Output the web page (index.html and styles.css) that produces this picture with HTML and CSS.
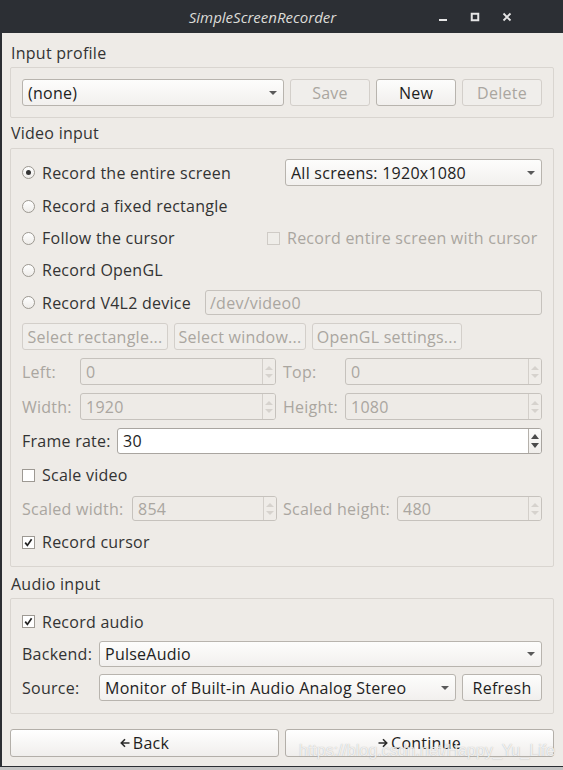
FILE: index.html
```html
<!DOCTYPE html>
<html>
<head>
<meta charset="utf-8">
<title>SimpleScreenRecorder</title>
<link rel="stylesheet" href="styles.css">
</head>
<body>
<div class="window">
  <div class="titlebar">
    <div class="title">SimpleScreenRecorder</div>
    <div class="wm">
      <span class="wm-btn"><svg width="10" height="10" viewBox="0 0 10 10"><rect x="1" y="7" width="8" height="2" fill="#e6e6e6"/></svg></span>
      <span class="wm-btn"><svg width="10" height="10" viewBox="0 0 10 10"><rect x="1.75" y="1.75" width="6.5" height="6.5" fill="none" stroke="#e6e6e6" stroke-width="2"/></svg></span>
      <span class="wm-btn"><svg width="10" height="10" viewBox="0 0 10 10"><path d="M1.5 1.5 L8.5 8.5 M8.5 1.5 L1.5 8.5" stroke="#e6e6e6" stroke-width="1.8"/></svg></span>
    </div>
  </div>

  <div class="content">
    <div class="sec-title t1">Input profile</div>
    <div class="group g1">
      <div class="row h27">
        <div class="combo w-profile"><span class="ctext">(none)</span><i class="arrow"></i></div>
        <div class="btn dis w80">Save</div>
        <div class="btn w80">New</div>
        <div class="btn dis w80">Delete</div>
      </div>
    </div>

    <div class="sec-title t2">Video input</div>
    <div class="group g2">
      <div class="row h27">
        <div class="opt left-263"><span class="radio on"><i></i></span><span>Record the entire screen</span></div>
        <div class="combo flex1"><span class="ctext">All screens: 1920x1080</span><i class="arrow"></i></div>
      </div>
      <div class="row h24 mt8">
        <div class="opt"><span class="radio"></span><span>Record a fixed rectangle</span></div>
      </div>
      <div class="row h24 mt8">
        <div class="opt left-245"><span class="radio"></span><span>Follow the cursor</span></div>
        <div class="opt dtext"><span class="cb dis"></span><span>Record entire screen with cursor</span></div>
      </div>
      <div class="row h24 mt8">
        <div class="opt"><span class="radio"></span><span>Record OpenGL</span></div>
      </div>
      <div class="row h25 mt8">
        <div class="opt left-183"><span class="radio"></span><span>Record V4L2 device</span></div>
        <div class="field dis flex1"><span class="ftext">/dev/video0</span></div>
      </div>
      <div class="row h27 mt8 gap6">
        <div class="btn dis w146">Select rectangle...</div>
        <div class="btn dis w132">Select window...</div>
        <div class="btn dis w150">OpenGL settings...</div>
      </div>
      <div class="grid4 h27 mt8">
        <span class="lbl dtext">Left:</span>
        <div class="spin dis"><span class="val">0</span><span class="sbtn"><i class="up"></i><i class="dn"></i></span></div>
        <span class="lbl dtext pl7">Top:</span>
        <div class="spin dis"><span class="val">0</span><span class="sbtn"><i class="up"></i><i class="dn"></i></span></div>
      </div>
      <div class="grid4 h27 mt8">
        <span class="lbl dtext">Width:</span>
        <div class="spin dis"><span class="val">1920</span><span class="sbtn"><i class="up"></i><i class="dn"></i></span></div>
        <span class="lbl dtext pl7">Height:</span>
        <div class="spin dis"><span class="val">1080</span><span class="sbtn"><i class="up"></i><i class="dn"></i></span></div>
      </div>
      <div class="row h26 mt8">
        <span class="lbl w95">Frame rate:</span>
        <div class="spin flex1"><span class="val">30</span><span class="sbtn"><i class="up"></i><i class="dn"></i></span></div>
      </div>
      <div class="row h26 mt8">
        <div class="opt"><span class="cb"></span><span>Scale video</span></div>
      </div>
      <div class="grid4b h25 mt8">
        <span class="lbl dtext">Scaled width:</span>
        <div class="spin dis"><span class="val">854</span><span class="sbtn"><i class="up"></i><i class="dn"></i></span></div>
        <span class="lbl dtext pl6">Scaled height:</span>
        <div class="spin dis"><span class="val">480</span><span class="sbtn"><i class="up"></i><i class="dn"></i></span></div>
      </div>
      <div class="row h26 mt8">
        <div class="opt"><span class="cb"><svg width="11" height="11" viewBox="0 0 11 11"><path d="M2.2 5.6 L4.4 8.4 L8.6 2.2" fill="none" stroke="#222" stroke-width="1.7"/></svg></span><span>Record cursor</span></div>
      </div>
    </div>

    <div class="sec-title t3">Audio input</div>
    <div class="group g3">
      <div class="row h25">
        <div class="opt"><span class="cb"><svg width="11" height="11" viewBox="0 0 11 11"><path d="M2.2 5.6 L4.4 8.4 L8.6 2.2" fill="none" stroke="#222" stroke-width="1.7"/></svg></span><span>Record audio</span></div>
      </div>
      <div class="row h26 mt7">
        <span class="lbl w77">Backend:</span>
        <div class="combo flex1"><span class="ctext">PulseAudio</span><i class="arrow"></i></div>
      </div>
      <div class="row h27 mt7 gap6">
        <span class="lbl w77 mr-6">Source:</span>
        <div class="combo flex1"><span class="ctext">Monitor of Built-in Audio Analog Stereo</span><i class="arrow"></i></div>
        <div class="btn w80">Refresh</div>
      </div>
    </div>

    <div class="navrow">
      <div class="btn nav"><svg class="navarrow" width="10" height="10" viewBox="0 0 10 10"><path d="M9.5 5 H1.5 M5 1.3 L1.3 5 L5 8.7" fill="none" stroke="#2a2a2a" stroke-width="1.6"/></svg>Back</div>
      <div class="btn nav"><svg class="navarrow" width="10" height="10" viewBox="0 0 10 10"><path d="M0.5 5 H8.5 M5 1.3 L8.7 5 L5 8.7" fill="none" stroke="#2a2a2a" stroke-width="1.6"/></svg>Continue</div>
    </div>
  </div>
  <div class="watermark">https://blog.csdn.net/Happy_Yu_Life</div>
</div>
</body>
</html>
```
FILE: styles.css
```css
html, body {
  margin: 0;
  padding: 0;
}
body {
  width: 563px;
  height: 770px;
  overflow: hidden;
  background: #c4c4c4;
  font-family: "Open Sans", "Noto Sans", sans-serif;
  font-size: 16px;
  letter-spacing: 0.25px;
  color: #333;
}
.window {
  position: relative;
  width: 561px;
  height: 766px;
  border-left: 2px solid #2b2e33;
  border-bottom: 1px solid #2b2e33;
  background: #eeebe7;
  display: flex;
  flex-direction: column;
}
.titlebar {
  height: 33px;
  flex: none;
  margin-left: -2px;
  background: #2c2f34;
  display: grid;
  grid-template-columns: 1fr;
  align-items: center;
}
.title {
  grid-area: 1 / 1;
  justify-self: stretch;
  text-align: center;
  padding-right: 38px;
  font-style: italic;
  color: #dcdcd8;
  font-size: 15px;
  letter-spacing: 0;
}
.wm {
  grid-area: 1 / 1;
  justify-self: end;
  display: flex;
  padding-right: 40px;
}
.wm-btn {
  width: 32px;
  height: 20px;
  display: flex;
  align-items: center;
  justify-content: center;
}
.content {
  flex: 1;
  display: flex;
  flex-direction: column;
  padding: 0 9px 0 8px;
}
.sec-title {
  line-height: 22px;
  padding-left: 1px;
  box-sizing: border-box;
  flex: none;
}
.t1 { height: 34px; padding-top: 9px; }
.t2 { height: 30px; padding-top: 4px; }
.t3 { height: 31px; padding-top: 6px; }
.group {
  border: 1px solid #d9d5d0;
  border-radius: 2px;
  flex: none;
}
.g1 { padding: 11px; }
.g2 { padding: 10px 11px 11px; }
.g3 { padding: 10px 11px 12px; }
.row {
  display: flex;
  align-items: center;
}
.h24 { height: 24px; }
.h25 { height: 25px; }
.h26 { height: 26px; }
.h27 { height: 27px; }
.mt7 { margin-top: 7px; }
.mt8 { margin-top: 8px; }
.gap6 { gap: 6px; }
.flex1 { flex: 1; }
.w-profile { width: 262px; flex: none; }
.w80 { width: 80px; }
.w146 { width: 146px; }
.w132 { width: 132px; }
.w150 { width: 150px; }
.w95 { width: 95px; flex: none; }
.w77 { width: 77px; flex: none; }
.mr-6 { margin-right: -6px; }
.pl7 { padding-left: 7px; }
.pl6 { padding-left: 6px; }
.left-263 { width: 263px; flex: none; }
.left-245 { width: 245px; flex: none; }
.left-183 { width: 183px; flex: none; }

.opt {
  display: flex;
  align-items: center;
  gap: 7px;
  white-space: nowrap;
}
.dtext { color: #aaa6a0; }
.lbl { white-space: nowrap; }

.radio {
  width: 13px;
  height: 13px;
  box-sizing: border-box;
  border-radius: 50%;
  border: 1px solid #9c9891;
  background: linear-gradient(#ffffff, #eeece9);
  display: flex;
  align-items: center;
  justify-content: center;
  flex: none;
}
.radio.on i {
  width: 5px;
  height: 5px;
  border-radius: 50%;
  background: #333;
}
.cb {
  width: 13px;
  height: 13px;
  box-sizing: border-box;
  border: 1px solid #9d9993;
  background: #fff;
  display: flex;
  align-items: center;
  justify-content: center;
  flex: none;
}
.cb.dis {
  border-color: #cfcbc6;
  background: #efede9;
}

.combo {
  height: 100%;
  box-sizing: border-box;
  border: 1px solid #b8b4ae;
  border-radius: 3px;
  background: linear-gradient(#fdfdfc, #f2f0ee);
  display: flex;
  align-items: center;
  padding: 0 6px 0 5px;
  color: #222;
}
.ctext {
  flex: 1;
  white-space: nowrap;
  overflow: hidden;
}
.arrow {
  width: 0;
  height: 0;
  border-left: 4px solid transparent;
  border-right: 4px solid transparent;
  border-top: 4px solid #5a5a5a;
  margin-left: 6px;
}
.btn {
  height: 100%;
  box-sizing: border-box;
  border: 1px solid #b8b4ae;
  border-radius: 3px;
  background: linear-gradient(#fdfdfc, #f1efed);
  display: flex;
  align-items: center;
  justify-content: center;
  color: #1e1e1e;
  white-space: nowrap;
  flex: none;
}
.btn.dis {
  border-color: #d3cfca;
  background: #f0eeeb;
  color: #aaa6a0;
}
.g1 .row .btn { margin-left: 6px; }

.field {
  height: 100%;
  box-sizing: border-box;
  border: 1px solid #c6c2bd;
  border-radius: 3px;
  background: #eeebe7;
  display: flex;
  align-items: center;
  padding-left: 4px;
  color: #aaa6a0;
}
.grid4 {
  display: grid;
  grid-template-columns: 58px 196px 69px 197px;
  align-items: center;
}
.grid4b {
  display: grid;
  grid-template-columns: 110px 145px 120px 145px;
  align-items: center;
}
.spin {
  height: 100%;
  box-sizing: border-box;
  border: 1px solid #a9a5a0;
  border-radius: 3px;
  background: #fff;
  display: flex;
  align-items: stretch;
  color: #1e1e1e;
}
.spin .val {
  flex: 1;
  display: flex;
  align-items: center;
  padding-left: 5px;
}
.sbtn {
  width: 12px;
  border-left: 1px solid #b5b1ab;
  display: flex;
  flex-direction: column;
  align-items: center;
  justify-content: center;
  gap: 4px;
  background: linear-gradient(#fbfbfa, #efedea);
  border-radius: 0 2px 2px 0;
}
.up {
  width: 0; height: 0;
  border-left: 4px solid transparent;
  border-right: 4px solid transparent;
  border-bottom: 5px solid #4a4a4a;
}
.dn {
  width: 0; height: 0;
  border-left: 4px solid transparent;
  border-right: 4px solid transparent;
  border-top: 5px solid #4a4a4a;
}
.spin.dis {
  border-color: #c6c2bd;
  background: #eeebe7;
  color: #aaa6a0;
}
.spin.dis .sbtn {
  border-left-color: #d3cfca;
  background: #efece8;
}
.spin.dis .up { border-bottom-color: #d6d2cd; border-bottom-width: 4px; }
.spin.dis .dn { border-top-color: #d6d2cd; border-top-width: 4px; }

.navrow {
  display: flex;
  gap: 6px;
  margin-top: 15px;
  height: 28px;
  flex: none;
}
.btn.nav {
  width: 269px;
  border-color: #b3afa9;
  background: linear-gradient(#ffffff, #f0eeec);
}
.navarrow {
  margin-right: 3px;
  flex: none;
}
.watermark {
  position: absolute;
  left: 297px;
  top: 742px;
  font-family: "Liberation Sans", Arial, sans-serif;
  font-size: 16px;
  letter-spacing: 0;
  color: rgba(255, 255, 255, 0.8);
  text-shadow: 0 0 1px rgba(140, 140, 140, 0.7);
  white-space: nowrap;
  pointer-events: none;
}
```
